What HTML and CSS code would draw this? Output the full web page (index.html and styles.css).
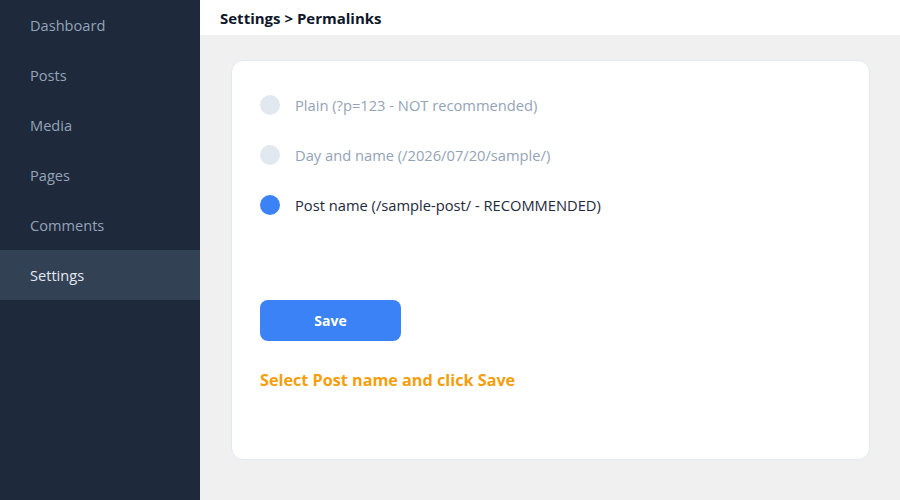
FILE: index.html
```html
<!DOCTYPE html>
<html lang="en">
<head>
    <meta charset="UTF-8">
    <meta name="viewport" content="width=device-width, initial-scale=1.0">
    <title>Settings - Permalinks</title>
    <link rel="stylesheet" href="styles.css">
</head>
<body>

    <nav class="sidebar">
        <a class="nav-item" href="#">Dashboard</a>
        <a class="nav-item" href="#">Posts</a>
        <a class="nav-item" href="#">Media</a>
        <a class="nav-item" href="#">Pages</a>
        <a class="nav-item" href="#">Comments</a>
        <a class="nav-item active" href="#">Settings</a>
    </nav>

    <div class="main">
        <header class="topbar">Settings &gt; Permalinks</header>

        <div class="content">
            <div class="card">
                <div class="options">
                    <label class="option muted">
                        <span class="dot"></span>
                        Plain (?p=123 - NOT recommended)
                    </label>
                    <label class="option muted">
                        <span class="dot"></span>
                        Day and name (/2026/07/20/sample/)
                    </label>
                    <label class="option">
                        <span class="dot checked"></span>
                        Post name (/sample-post/ - RECOMMENDED)
                    </label>
                </div>

                <button class="save-btn">Save</button>
                <p class="hint">Select Post name and click Save</p>
            </div>
        </div>
    </div>

</body>
</html>
```

FILE: styles.css
```css
* {
    box-sizing: border-box;
}
body {
    margin: 0;
    font-family: "Open Sans", "Noto Sans", sans-serif;
    display: flex;
    height: 500px;
    background: #f0f0f0;
}
.sidebar {
    width: 200px;
    flex-shrink: 0;
    background: #1e293b;
    display: flex;
    flex-direction: column;
}
.nav-item {
    height: 50px;
    display: flex;
    align-items: center;
    padding-left: 30px;
    font-size: 14.6px;
    color: #94a3b8;
    text-decoration: none;
}
.nav-item.active {
    background: #334155;
    color: #e2e8f0;
}
.main {
    flex: 1;
    display: flex;
    flex-direction: column;
}
.topbar {
    height: 36px;
    background: #fff;
    padding-left: 20px;
    display: flex;
    align-items: center;
    font-size: 15px;
    font-weight: 700;
    color: #0f172a;
}
.content {
    padding: 25px 30px 40px 31px;
}
.card {
    height: 400px;
    background: #fff;
    border: 1px solid #e2e8f0;
    border-radius: 12px;
    padding: 19px 28px;
}
.options {
    display: flex;
    flex-direction: column;
}
.option {
    height: 50px;
    display: flex;
    align-items: center;
    gap: 15px;
    font-size: 14.7px;
    color: #1e293b;
}
.option.muted {
    color: #94a3b8;
}
.dot {
    width: 20px;
    height: 20px;
    border-radius: 50%;
    background: #e2e8f0;
}
.dot.checked {
    background: #3b82f6;
}
.save-btn {
    margin-top: 70px;
    width: 141px;
    height: 41px;
    border: none;
    border-radius: 8px;
    background: #3b82f6;
    color: #fff;
    font-family: inherit;
    font-size: 14px;
    font-weight: 700;
}
.hint {
    margin: 28px 0 0;
    font-size: 16.2px;
    font-weight: 700;
    color: #f59e0b;
}
```
